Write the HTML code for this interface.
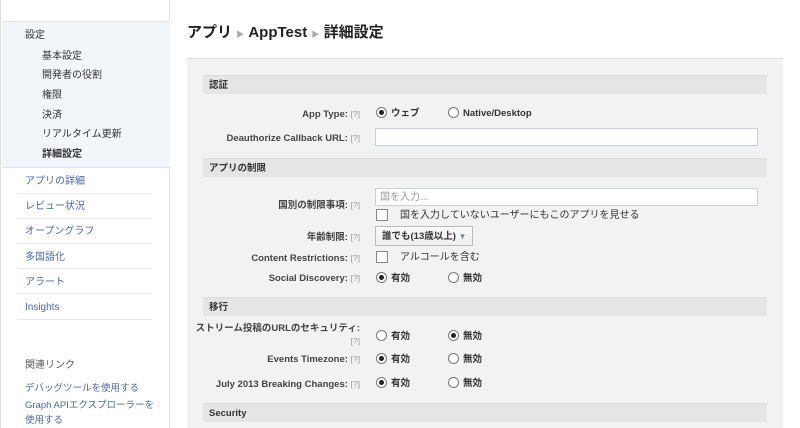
<!DOCTYPE html>
<html><head><meta charset="utf-8"><style>
*{margin:0;padding:0;box-sizing:border-box}
body{width:800px;height:428px;overflow:hidden;background:#fff;font-family:"Liberation Sans","Noto Sans CJK JP",sans-serif;font-size:10px;line-height:12px;color:#333;position:relative}
.a{position:absolute;white-space:nowrap;line-height:12px}
#side{position:absolute;left:0;top:0;width:170px;height:428px;border-left:1px solid #ddd;border-right:1px solid #e5e5e5;background:#fff}
#blue{position:absolute;left:1px;top:21px;width:168px;height:147px;background:#f2f6fb;border-top:1px solid #e2e6ec;border-bottom:1px solid #e2e6ec}
.sub{left:42px;color:#333;margin-top:1px}
.lk{left:25px;color:#4b67a1;font-size:10px;margin-top:1px}
.sep{position:absolute;left:17px;width:135px;height:1px;background:#e9e9e9}
#panel{position:absolute;left:187px;top:58px;width:596px;height:370px;background:#f2f2f2;border-top:1px solid #ddd}
.hd{position:absolute;left:203px;width:564px;height:19px;background:#e5e5e5;border-top:1px solid #ddd;font-weight:bold;font-size:9.5px;line-height:12px;padding:4px 0 0 6px;color:#333}
.lb{right:440px;font-weight:bold;text-align:right;color:#444;font-size:9.5px;margin-top:1px}
.lb i{font-style:normal;font-weight:normal;color:#999;font-size:8.5px}
.r{position:absolute;width:11px;height:11px;border:1px solid #777;border-radius:50%;background:#fff}
.r.on::after{content:"";position:absolute;left:2px;top:2px;width:5px;height:5px;border-radius:50%;background:#222}
.cb{position:absolute;width:12px;height:12px;border:1px solid #888;background:#fff}
.in{position:absolute;left:375px;width:383px;height:18px;background:#fff;border:1px solid #c7cfe0}
.t{font-weight:bold;color:#333;font-size:9.5px;margin-top:2px}
.m{margin-top:2px}
</style></head><body>
<div id="side"><div id="blue"></div></div>
<div class="a" style="left:25px;top:30px">設定</div>
<div class="a sub" style="top:50px">基本設定</div>
<div class="a sub" style="top:69px">開発者の役割</div>
<div class="a sub" style="top:89px">権限</div>
<div class="a sub" style="top:109px">決済</div>
<div class="a sub" style="top:128px">リアルタイム更新</div>
<div class="a sub" style="top:148px;font-weight:bold">詳細設定</div>
<div class="a lk" style="top:175px">アプリの詳細</div><div class="sep" style="top:193px"></div>
<div class="a lk" style="top:200px">レビュー状況</div><div class="sep" style="top:218px"></div>
<div class="a lk" style="top:225px">オープングラフ</div><div class="sep" style="top:243px"></div>
<div class="a lk" style="top:251px">多国語化</div><div class="sep" style="top:268px"></div>
<div class="a lk" style="top:276px">アラート</div><div class="sep" style="top:293px"></div>
<div class="a lk" style="top:301px">Insights</div><div class="sep" style="top:319px"></div>
<div class="a" style="left:25px;top:360px;color:#555">関連リンク</div>
<div class="a lk" style="top:382px;font-size:9.5px">デバッグツールを使用する</div>
<div class="a lk" style="top:399px;font-size:9.5px">Graph APIエクスプローラーを</div>
<div class="a lk" style="top:414px;font-size:9.5px">使用する</div>

<div class="a" style="left:187px;top:24px;font-size:15px;line-height:18px;font-weight:bold;color:#222">アプリ <span style="color:#aaa;font-size:8px">▶</span> AppTest <span style="color:#aaa;font-size:8px">▶</span> 詳細設定</div>
<div id="panel"></div>
<div class="hd" style="top:75px">認証</div>
<div class="hd" style="top:158px">アプリの制限</div>
<div class="hd" style="top:297px">移行</div>
<div class="hd" style="top:403px">Security</div>

<div class="a lb" style="top:107px">App Type: <i>[?]</i></div>
<div class="r on" style="left:376px;top:107px"></div><div class="a t" style="left:391px;top:106px">ウェブ</div>
<div class="r" style="left:448px;top:107px"></div><div class="a t" style="left:463px;top:106px">Native/Desktop</div>
<div class="a lb" style="top:131px">Deauthorize Callback URL: <i>[?]</i></div>
<div class="in" style="top:128px"></div>

<div class="a lb" style="top:198px">国別の制限事項: <i>[?]</i></div>
<div class="in" style="top:188px"></div><div class="a m" style="left:380px;top:190px;color:#999">国を入力...</div>
<div class="cb" style="left:376px;top:209px"></div><div class="a m" style="left:400px;top:208px">国を入力していないユーザーにもこのアプリを見せる</div>
<div class="a lb" style="top:230px">年齢制限: <i>[?]</i></div>
<div class="a" style="left:375px;top:226px;width:98px;height:20px;border:1px solid #bbb;background:linear-gradient(#fafafa,#eee);font-weight:bold;font-size:9.5px;padding:4px 0 0 6px">誰でも(13歳以上) <span style="color:#6d84b4;font-size:8px">▼</span></div>
<div class="a lb" style="top:251px">Content Restrictions: <i>[?]</i></div>
<div class="cb" style="left:376px;top:251px"></div><div class="a m" style="left:400px;top:250px">アルコールを含む</div>
<div class="a lb" style="top:271px">Social Discovery: <i>[?]</i></div>
<div class="r on" style="left:376px;top:272px"></div><div class="a t" style="left:391px;top:271px">有効</div>
<div class="r" style="left:448px;top:272px"></div><div class="a t" style="left:463px;top:271px">無効</div>

<div class="a lb" style="top:322px">ストリーム投稿のURLのセキュリティ:</div>
<div class="a lb" style="top:334px"><i>[?]</i></div>
<div class="r" style="left:376px;top:330px"></div><div class="a t" style="left:391px;top:329px">有効</div>
<div class="r on" style="left:448px;top:330px"></div><div class="a t" style="left:463px;top:329px">無効</div>
<div class="a lb" style="top:352px">Events Timezone: <i>[?]</i></div>
<div class="r on" style="left:376px;top:353px"></div><div class="a t" style="left:391px;top:352px">有効</div>
<div class="r" style="left:448px;top:353px"></div><div class="a t" style="left:463px;top:352px">無効</div>
<div class="a lb" style="top:377px">July 2013 Breaking Changes: <i>[?]</i></div>
<div class="r on" style="left:376px;top:377px"></div><div class="a t" style="left:391px;top:376px">有効</div>
<div class="r" style="left:448px;top:377px"></div><div class="a t" style="left:463px;top:376px">無効</div>
</body></html>
